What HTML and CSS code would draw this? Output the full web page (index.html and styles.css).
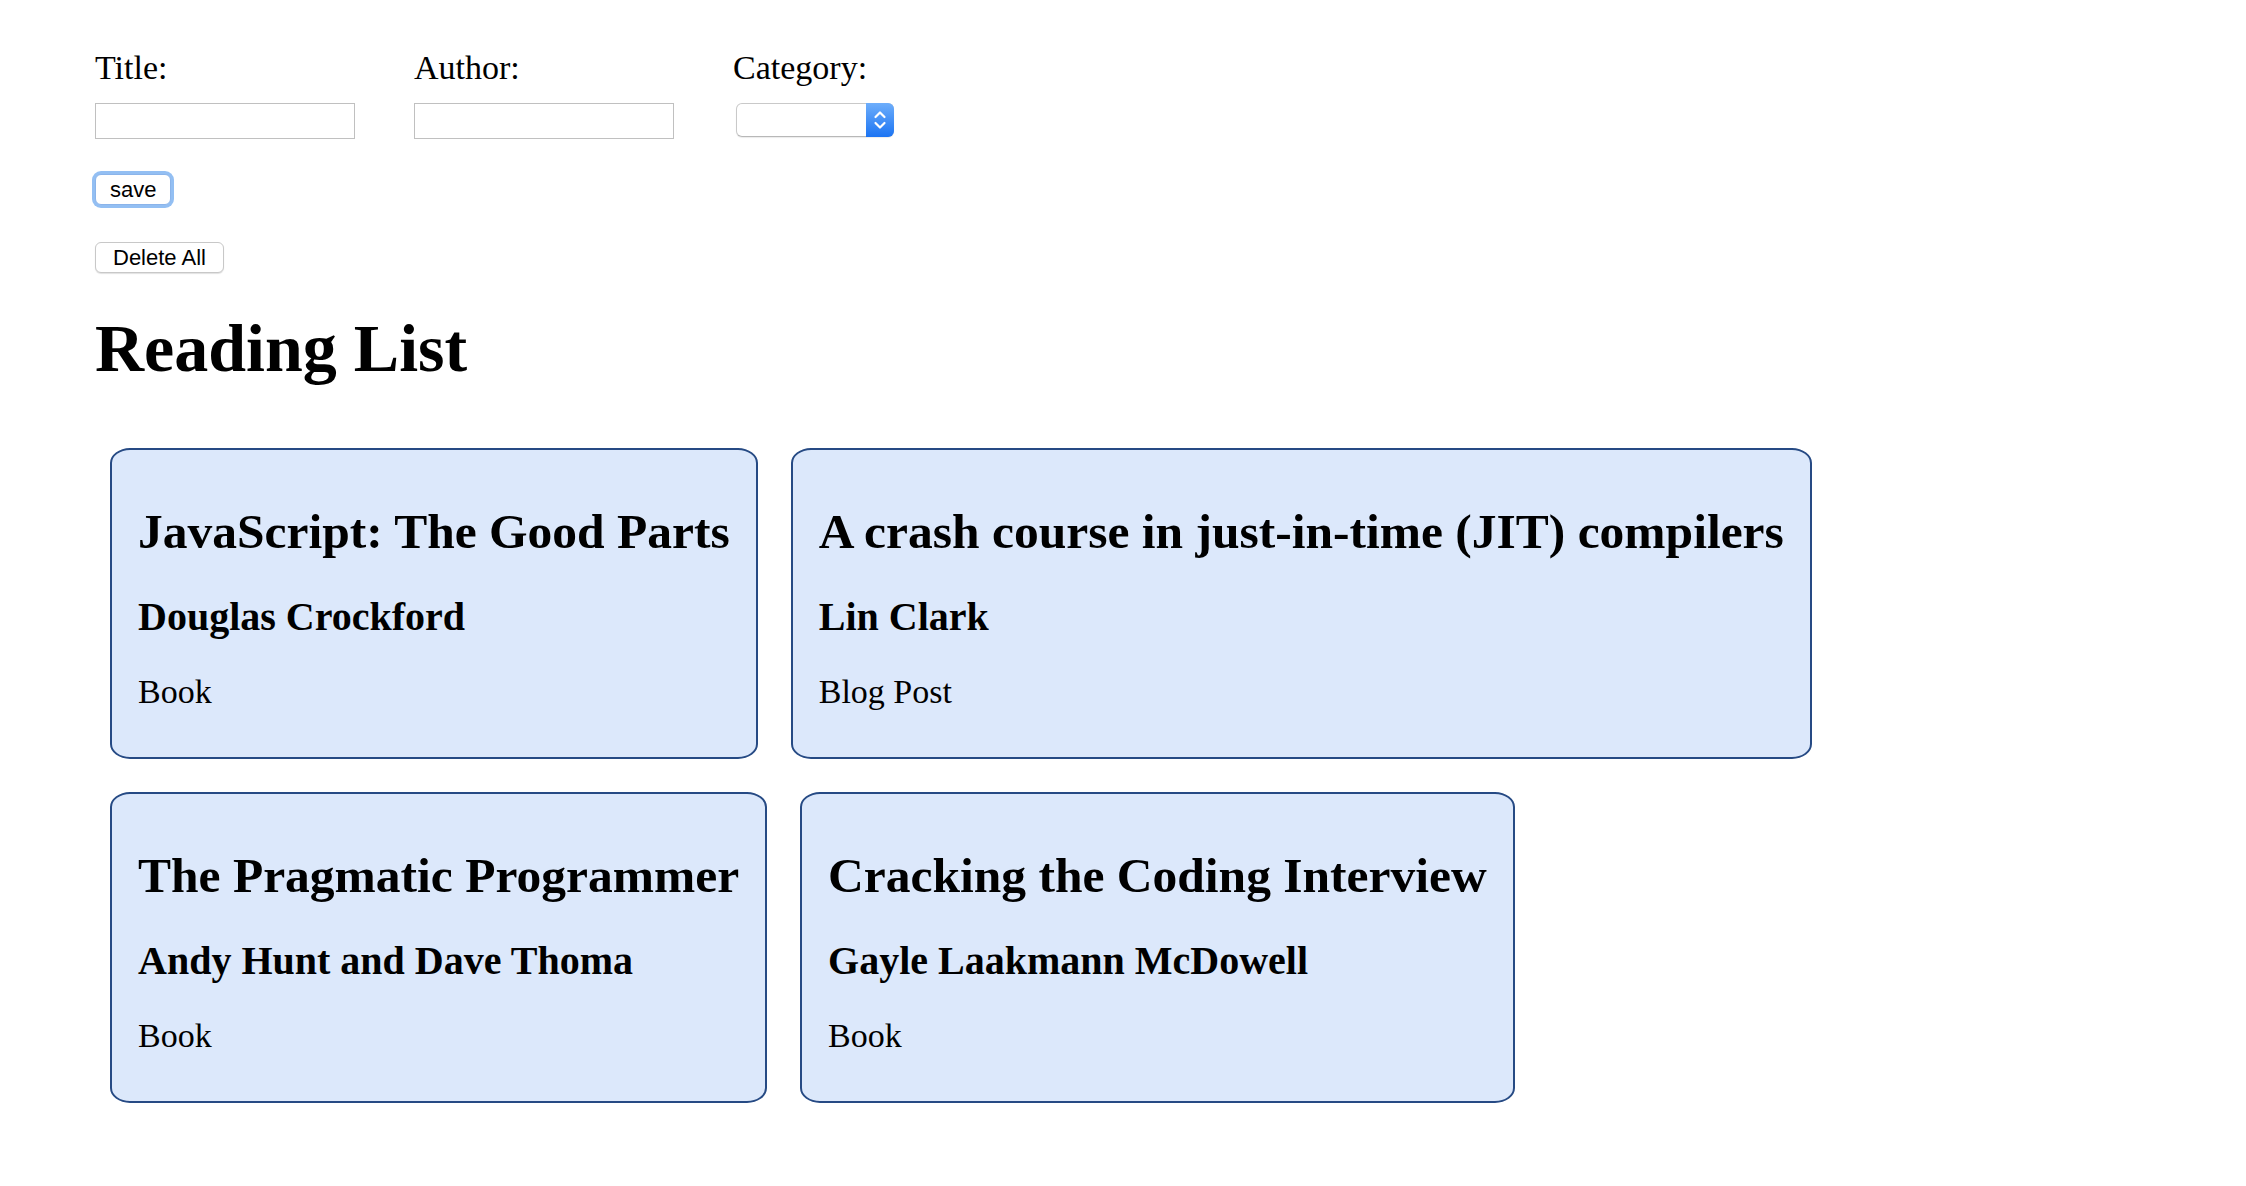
FILE: index.html
```html
<!DOCTYPE html>
<html lang="en">
<head>
<meta charset="utf-8">
<title>Reading List</title>
<link rel="stylesheet" href="styles.css">
</head>
<body>
<div class="page">
  <form class="entry">
    <div class="fields">
      <div class="field">
        <label class="label" for="title">Title:</label>
        <input class="text-input" id="title" type="text">
      </div>
      <div class="field">
        <label class="label" for="author">Author:</label>
        <input class="text-input" id="author" type="text">
      </div>
      <div class="field">
        <label class="label" for="category">Category:</label>
        <div class="select-wrap">
          <select class="select" id="category"><option></option></select>
          <span class="select-arrows">
            <svg width="28" height="34" viewBox="0 0 28 34"><path d="M9.5 14 L14 9.5 L18.5 14" fill="none" stroke="#fff" stroke-width="2.2" stroke-linecap="round" stroke-linejoin="round"/><path d="M9.5 20 L14 24.5 L18.5 20" fill="none" stroke="#fff" stroke-width="2.2" stroke-linecap="round" stroke-linejoin="round"/></svg>
          </span>
        </div>
      </div>
    </div>
    <button class="btn btn-save" type="button">save</button>
  </form>
  <button class="btn btn-delete" type="button">Delete All</button>
  <h1 class="list-title">Reading List</h1>
  <div class="cards">
    <div class="card">
      <h2 class="card-title">JavaScript: The Good Parts</h2>
      <h3 class="card-author">Douglas Crockford</h3>
      <p class="card-category">Book</p>
    </div>
    <div class="card">
      <h2 class="card-title">A crash course in just-in-time (JIT) compilers</h2>
      <h3 class="card-author">Lin Clark</h3>
      <p class="card-category">Blog Post</p>
    </div>
    <div class="card">
      <h2 class="card-title">The Pragmatic Programmer</h2>
      <h3 class="card-author">Andy Hunt and Dave Thoma</h3>
      <p class="card-category">Book</p>
    </div>
    <div class="card">
      <h2 class="card-title">Cracking the Coding Interview</h2>
      <h3 class="card-author">Gayle Laakmann McDowell</h3>
      <p class="card-category">Book</p>
    </div>
  </div>
</div>
</body>
</html>
```
FILE: styles.css
```css
html, body {
  margin: 0;
  padding: 0;
  background: #ffffff;
}

body {
  font-family: "Liberation Serif", "Times New Roman", serif;
  font-size: 34px;
  color: #000;
}

.page {
  display: flex;
  flex-direction: column;
  align-items: flex-start;
  padding: 48px 0 60px 95px;
}

.entry {
  display: flex;
  flex-direction: column;
  align-items: flex-start;
  margin: 0;
}

.fields {
  display: flex;
  gap: 59px;
}

.field {
  display: flex;
  flex-direction: column;
  align-items: flex-start;
  width: 260px;
}

.label {
  font-size: 34px;
  line-height: 40px;
}

.text-input {
  box-sizing: border-box;
  margin: 15px 0 0;
  width: 260px;
  height: 36px;
  border: 1px solid #c0c0c0;
  border-radius: 0;
  padding: 0 6px;
  background: #fff;
  font: 22px "Liberation Sans", Arial, sans-serif;
}

.select-wrap {
  position: relative;
  margin: 15px 0 0 3px;
  width: 158px;
  height: 34px;
  line-height: 0;
}

.select {
  display: block;
  -webkit-appearance: none;
  appearance: none;
  box-sizing: border-box;
  width: 158px;
  height: 34px;
  margin: 0;
  border: 1px solid #c9c9c9;
  border-bottom-color: #b8b8b8;
  border-radius: 6px;
  background: #fff;
  box-shadow: 0 1px 1px rgba(0, 0, 0, 0.08);
  font: 22px "Liberation Sans", Arial, sans-serif;
}

.select-arrows {
  position: absolute;
  top: 0;
  right: 0;
  width: 28px;
  height: 34px;
  border-radius: 0 6px 6px 0;
  background: linear-gradient(#6eaefb, #1b74f3);
  display: flex;
  align-items: center;
  justify-content: center;
}

.select-arrows svg {
  display: block;
}

.btn {
  box-sizing: border-box;
  height: 31px;
  padding: 0 14px;
  border: 1px solid #c8c8c8;
  border-radius: 6px;
  background: #ffffff;
  box-shadow: 0 1px 1px rgba(0, 0, 0, 0.12);
  font: 22px "Liberation Sans", Arial, sans-serif;
  color: #000;
  line-height: 29px;
}

.btn-save {
  margin-top: 35px;
  border-color: #8bb4ea;
  box-shadow: 0 0 0 3px #93bff3;
}

.btn-delete {
  margin-top: 37px;
  padding: 0 17px;
}

.list-title {
  margin: 36px 0 61px;
  font-size: 68px;
  line-height: 78px;
  font-weight: bold;
}

.cards {
  display: flex;
  flex-wrap: wrap;
  gap: 33px;
  margin-left: 15px;
  max-width: 2100px;
}

.card {
  box-sizing: border-box;
  padding: 53px 26px 45px 26px;
  border: 2px solid #264a84;
  border-radius: 20px / 15px;
  background: #dce8fb;
}

.card-title {
  margin: 0 0 33px;
  font-size: 49.5px;
  line-height: 58px;
  font-weight: bold;
  white-space: nowrap;
}

.card-author {
  margin: 0 0 32px;
  font-size: 40px;
  line-height: 46px;
  font-weight: bold;
  white-space: nowrap;
}

.card-category {
  margin: 0;
  font-size: 34px;
  line-height: 40px;
}
```
